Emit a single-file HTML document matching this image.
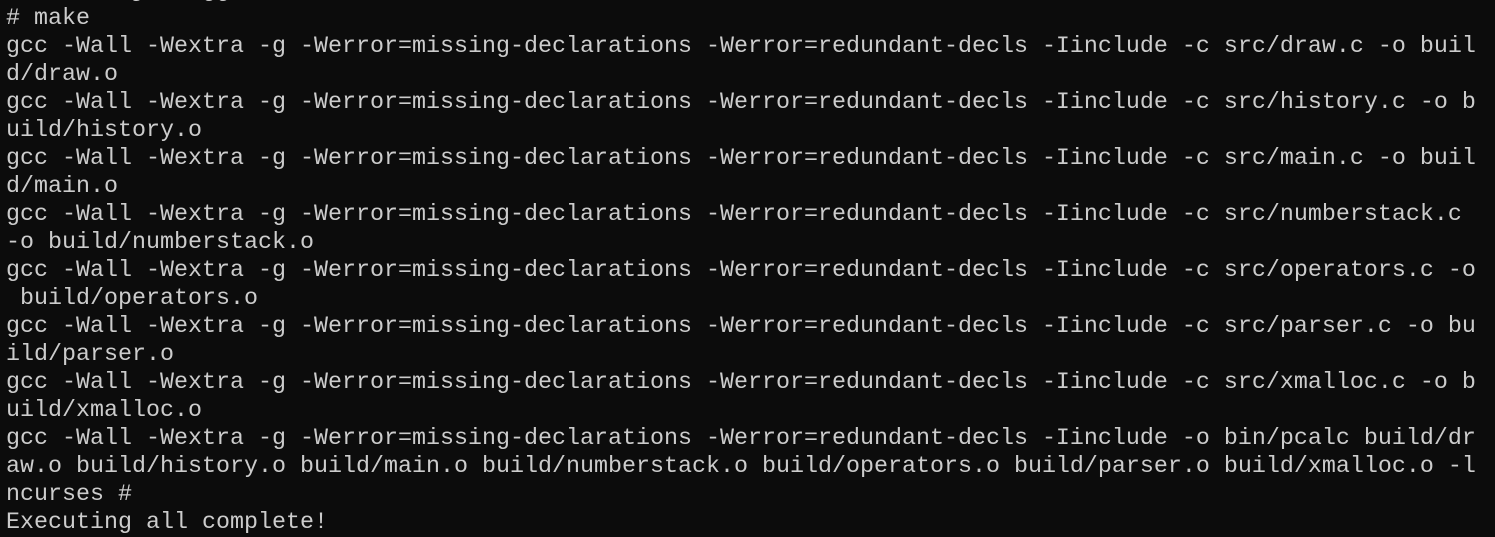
<!DOCTYPE html>
<html><head><meta charset="utf-8"><style>
html,body{margin:0;padding:0;background:#0c0c0c;width:1495px;height:535px;overflow:hidden}
pre{margin:0;position:absolute;left:6px;top:-23px;font-family:"Liberation Mono",monospace;font-size:23.33px;line-height:28px;color:#cccccc;white-space:pre}
</style></head><body><pre>         j    gg
# make
gcc -Wall -Wextra -g -Werror=missing-declarations -Werror=redundant-decls -Iinclude -c src/draw.c -o buil
d/draw.o
gcc -Wall -Wextra -g -Werror=missing-declarations -Werror=redundant-decls -Iinclude -c src/history.c -o b
uild/history.o
gcc -Wall -Wextra -g -Werror=missing-declarations -Werror=redundant-decls -Iinclude -c src/main.c -o buil
d/main.o
gcc -Wall -Wextra -g -Werror=missing-declarations -Werror=redundant-decls -Iinclude -c src/numberstack.c
-o build/numberstack.o
gcc -Wall -Wextra -g -Werror=missing-declarations -Werror=redundant-decls -Iinclude -c src/operators.c -o
 build/operators.o
gcc -Wall -Wextra -g -Werror=missing-declarations -Werror=redundant-decls -Iinclude -c src/parser.c -o bu
ild/parser.o
gcc -Wall -Wextra -g -Werror=missing-declarations -Werror=redundant-decls -Iinclude -c src/xmalloc.c -o b
uild/xmalloc.o
gcc -Wall -Wextra -g -Werror=missing-declarations -Werror=redundant-decls -Iinclude -o bin/pcalc build/dr
aw.o build/history.o build/main.o build/numberstack.o build/operators.o build/parser.o build/xmalloc.o -l
ncurses #
Executing all complete!</pre></body></html>
